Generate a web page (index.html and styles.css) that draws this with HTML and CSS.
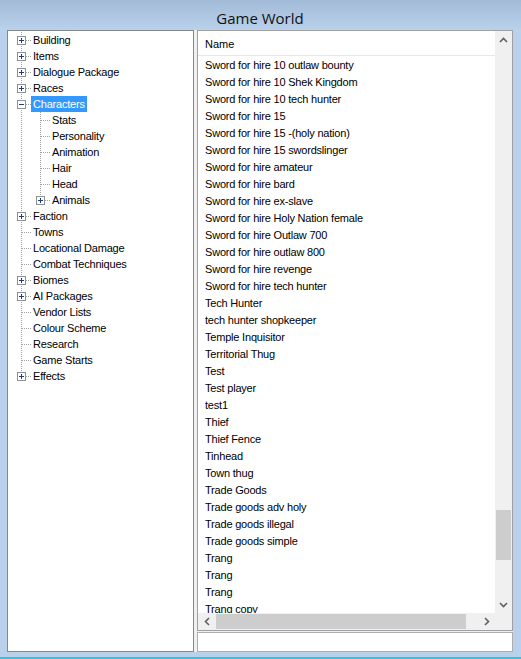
FILE: index.html
```html
<!DOCTYPE html>
<html lang="en">
<head>
  <meta charset="UTF-8" />
  <title>Game World</title>
  <link rel="stylesheet" href="styles.css">
</head>
<body>
  <div class="window">
    <div class="titlebar">Game World</div>

    <div class="client">
      <!-- category tree -->
      <div class="tree">
        <ul class="nodes">
          <li><div class="row"><span class="twisty"><span class="box plus"></span></span><span class="label">Building</span></div></li>
          <li><div class="row"><span class="twisty"><span class="box plus"></span></span><span class="label">Items</span></div></li>
          <li><div class="row"><span class="twisty"><span class="box plus"></span></span><span class="label">Dialogue Package</span></div></li>
          <li><div class="row"><span class="twisty"><span class="box plus"></span></span><span class="label">Races</span></div></li>
          <li>
            <div class="row"><span class="twisty"><span class="box minus"></span></span><span class="label selected">Characters</span></div>
            <ul class="nodes children">
              <li><div class="row"><span class="twisty leaf"></span><span class="label">Stats</span></div></li>
              <li><div class="row"><span class="twisty leaf"></span><span class="label">Personality</span></div></li>
              <li><div class="row"><span class="twisty leaf"></span><span class="label">Animation</span></div></li>
              <li><div class="row"><span class="twisty leaf"></span><span class="label">Hair</span></div></li>
              <li><div class="row"><span class="twisty leaf"></span><span class="label">Head</span></div></li>
              <li><div class="row"><span class="twisty"><span class="box plus"></span></span><span class="label">Animals</span></div></li>
            </ul>
          </li>
          <li><div class="row"><span class="twisty"><span class="box plus"></span></span><span class="label">Faction</span></div></li>
          <li><div class="row"><span class="twisty leaf"></span><span class="label">Towns</span></div></li>
          <li><div class="row"><span class="twisty leaf"></span><span class="label">Locational Damage</span></div></li>
          <li><div class="row"><span class="twisty leaf"></span><span class="label">Combat Techniques</span></div></li>
          <li><div class="row"><span class="twisty"><span class="box plus"></span></span><span class="label">Biomes</span></div></li>
          <li><div class="row"><span class="twisty"><span class="box plus"></span></span><span class="label">AI Packages</span></div></li>
          <li><div class="row"><span class="twisty leaf"></span><span class="label">Vendor Lists</span></div></li>
          <li><div class="row"><span class="twisty leaf"></span><span class="label">Colour Scheme</span></div></li>
          <li><div class="row"><span class="twisty leaf"></span><span class="label">Research</span></div></li>
          <li><div class="row"><span class="twisty leaf"></span><span class="label">Game Starts</span></div></li>
          <li><div class="row"><span class="twisty"><span class="box plus"></span></span><span class="label">Effects</span></div></li>
        </ul>
      </div>

      <div class="side">
        <!-- item list -->
        <div class="list">
          <div class="list-body">
            <div class="list-header">Name</div>
            <div class="items">
              <div class="item">Sword for hire 10 outlaw bounty</div>
              <div class="item">Sword for hire 10 Shek Kingdom</div>
              <div class="item">Sword for hire 10 tech hunter</div>
              <div class="item">Sword for hire 15</div>
              <div class="item">Sword for hire 15 -(holy nation)</div>
              <div class="item">Sword for hire 15 swordslinger</div>
              <div class="item">Sword for hire amateur</div>
              <div class="item">Sword for hire bard</div>
              <div class="item">Sword for hire ex-slave</div>
              <div class="item">Sword for hire Holy Nation female</div>
              <div class="item">Sword for hire Outlaw 700</div>
              <div class="item">Sword for hire outlaw 800</div>
              <div class="item">Sword for hire revenge</div>
              <div class="item">Sword for hire tech hunter</div>
              <div class="item">Tech Hunter</div>
              <div class="item">tech hunter shopkeeper</div>
              <div class="item">Temple Inquisitor</div>
              <div class="item">Territorial Thug</div>
              <div class="item">Test</div>
              <div class="item">Test player</div>
              <div class="item">test1</div>
              <div class="item">Thief</div>
              <div class="item">Thief Fence</div>
              <div class="item">Tinhead</div>
              <div class="item">Town thug</div>
              <div class="item">Trade Goods</div>
              <div class="item">Trade goods adv holy</div>
              <div class="item">Trade goods illegal</div>
              <div class="item">Trade goods simple</div>
              <div class="item">Trang</div>
              <div class="item">Trang</div>
              <div class="item">Trang</div>
              <div class="item">Trang copy</div>
            </div>
          </div>

          <div class="vscroll">
            <div class="sbtn"><svg width="9" height="6" viewBox="0 0 9 6"><polyline points="1,5 4.5,1.5 8,5" /></svg></div>
            <div class="track"><div class="vthumb"></div></div>
            <div class="sbtn"><svg width="9" height="6" viewBox="0 0 9 6"><polyline points="1,1 4.5,4.5 8,1" /></svg></div>
          </div>

          <div class="hscroll">
            <div class="sbtn"><svg width="6" height="9" viewBox="0 0 6 9"><polyline points="5,1 1.5,4.5 5,8" /></svg></div>
            <div class="track"><div class="hthumb"></div></div>
            <div class="sbtn"><svg width="6" height="9" viewBox="0 0 6 9"><polyline points="1,1 4.5,4.5 1,8" /></svg></div>
          </div>

          <div class="corner"></div>
        </div>

        <div class="textbox"></div>
      </div>
    </div>
  </div>
</body>
</html>
```

FILE: styles.css
```css
* {
  box-sizing: border-box;
}
body {
  margin: 0;
  font-family: "Liberation Sans", Arial, sans-serif;
  font-size: 11px;
  color: #000;
}

/* ───── Window frame ───── */
.window {
  width: 521px;
  height: 659px;
  display: flex;
  flex-direction: column;
  padding: 0 8px 5px 7px;
  background: linear-gradient(#a2bbd8, #b9d1ea 30px);
  border-bottom: 2px solid #2bc5e0;
}
.titlebar {
  flex: none;
  height: 30px;
  display: flex;
  align-items: center;
  justify-content: center;
  padding-top: 6px;
  font-family: "Open Sans", "Noto Sans", sans-serif;
  font-size: 15px;
  color: #111;
}
.client {
  flex: 1;
  min-height: 0;
  display: flex;
  gap: 3px;
  background: #f0f0f0;
}

/* ───── Tree ───── */
.tree {
  width: 187px;
  flex: none;
  border: 1px solid #828790;
  background: #fff;
  padding: 1px 0 0 4px;
  overflow: hidden;
}
.nodes {
  list-style: none;
  margin: 0;
  padding: 0;
}
.nodes li {
  background: repeating-linear-gradient(to bottom, #a0a0a0 0 1px, transparent 1px 2px) 9px 0 / 1px 100% no-repeat;
}
.nodes li:last-child {
  background-size: 1px 8px;
}
.children {
  padding-left: 19px;
}
.row {
  display: flex;
  align-items: center;
  height: 16px;
}
.twisty {
  width: 19px;
  height: 16px;
  flex: none;
  display: flex;
  align-items: center;
  padding-left: 5px;
  background: repeating-linear-gradient(to right, #a0a0a0 0 1px, transparent 1px 2px) 10px 8px / 9px 1px no-repeat;
}
.box {
  width: 9px;
  height: 9px;
  border: 1px solid #919191;
  margin-top: 1px;
}
.box.plus {
  background:
    linear-gradient(#1e3c80, #1e3c80) center / 5px 1px no-repeat,
    linear-gradient(#1e3c80, #1e3c80) center / 1px 5px no-repeat,
    #fff;
}
.box.minus {
  background: linear-gradient(#1e3c80, #1e3c80) center / 5px 1px no-repeat, #fff;
}
.label {
  line-height: 16px;
  padding: 0 2px;
  white-space: nowrap;
  letter-spacing: -0.2px;
}
.label.selected {
  background: #3399ff;
  color: #fff;
}

/* ───── List view ───── */
.side {
  flex: 1;
  min-width: 0;
  display: flex;
  flex-direction: column;
  gap: 1px;
}
.list {
  flex: 1;
  min-height: 0;
  display: grid;
  grid-template-columns: 1fr 17px;
  grid-template-rows: 1fr 17px;
  border: 1px solid #a0a0a0;
  background: #fff;
}
.list-body {
  overflow: hidden;
  min-height: 0;
}
.list-header {
  height: 25px;
  line-height: 23px;
  padding: 2px 0 0 7px;
  border-bottom: 1px solid #e1e8f0;
}
.items {
  padding-top: 1px;
}
.item {
  height: 17px;
  line-height: 17px;
  padding-left: 7px;
  white-space: nowrap;
  letter-spacing: -0.2px;
}

/* ───── Scrollbars ───── */
.vscroll,
.hscroll,
.corner {
  background: #f0f0f0;
}
.vscroll {
  display: flex;
  flex-direction: column;
}
.hscroll {
  display: flex;
}
.sbtn {
  width: 17px;
  height: 17px;
  flex: none;
  display: flex;
  align-items: center;
  justify-content: center;
}
.sbtn polyline {
  fill: none;
  stroke: #606060;
  stroke-width: 1.6;
}
.track {
  flex: 1;
}
.vthumb {
  height: 50px;
  margin: 462px 1px 0;
  background: #cdcdcd;
}
.hthumb {
  width: 250px;
  height: 15px;
  margin: 1px 0 0 1px;
  background: #cdcdcd;
}

.textbox {
  height: 20px;
  flex: none;
  border: 1px solid #abadb3;
  background: #fff;
}
```
